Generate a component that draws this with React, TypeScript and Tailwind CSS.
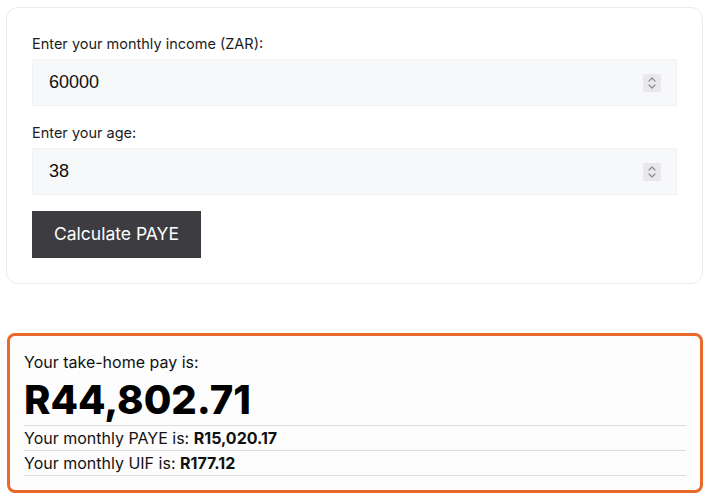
import { useState } from 'react';

function Spinner() {
  return (
    <div className="absolute right-4 top-1/2 -translate-y-1/2 flex h-[18px] w-[18px] items-center justify-center rounded-[2px] bg-[#e9e9ed]">
      <svg width="10" height="14" viewBox="0 0 10 14" fill="none" stroke="#8a8a8e" strokeWidth="1.2" strokeLinecap="round" strokeLinejoin="round">
        <path d="M2 5 L5 2 L8 5" />
        <path d="M2 9 L5 12 L8 9" />
      </svg>
    </div>
  );
}

interface NumberFieldProps {
  label: string;
  value: string;
  onChange: (v: string) => void;
}

function NumberField({ label, value, onChange }: NumberFieldProps) {
  return (
    <div className="flex flex-col">
      <label className="mb-[5px] text-[14.5px] leading-[21px] text-[#1c1c1c]">{label}</label>
      <div className="relative">
        <input
          type="text"
          value={value}
          onChange={(e) => onChange(e.target.value)}
          className="h-[47px] w-full border border-[#f1f2f4] bg-[#f7f8fa] px-4 text-[18px] text-[#111] outline-none"
          style={{ fontFamily: '"Liberation Sans", Arial, sans-serif' }}
        />
        <Spinner />
      </div>
    </div>
  );
}

export default function App() {
  const [income, setIncome] = useState('60000');
  const [age, setAge] = useState('38');

  return (
    <div className="min-h-screen bg-white pl-[6px] pr-[4px] pt-[7px] pb-2" style={{ fontFamily: 'Inter, "Noto Sans", sans-serif' }}>
      <div className="rounded-[12px] border border-[#ebebeb] bg-white p-[25px]">
        <div className="flex flex-col gap-4">
          <NumberField label="Enter your monthly income (ZAR):" value={income} onChange={setIncome} />
          <NumberField label="Enter your age:" value={age} onChange={setAge} />
          <div>
            <button
              type="button"
              className="h-[47px] w-[169px] bg-[#3d3c40] text-[17.5px] text-white"
            >
              Calculate PAYE
            </button>
          </div>
        </div>
      </div>

      <div className="mt-[49px] ml-px rounded-[8px] border-[3px] border-[#e8692a] bg-[#fdfdfd] px-[14px] pt-[14px] pb-[14px]">
        <p className="text-[16px] leading-[24px] text-[#111]">Your take-home pay is:</p>
        <p className="h-[51px] text-[40px] font-extrabold leading-[51px] text-black">R44,802.71</p>
        <p className="border-t border-b border-[#dddddd] text-[16px] leading-[24px] text-[#111]">
          Your monthly PAYE is: <strong className="font-bold">R15,020.17</strong>
        </p>
        <p className="border-b border-[#dddddd] text-[16px] leading-[24px] text-[#111]">
          Your monthly UIF is: <strong className="font-bold">R177.12</strong>
        </p>
      </div>
    </div>
  );
}
